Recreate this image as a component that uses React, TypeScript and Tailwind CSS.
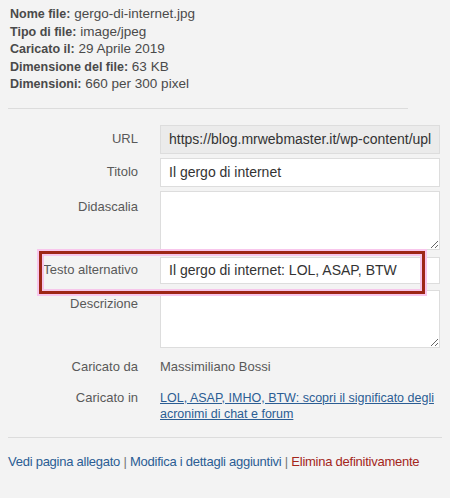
const infoRows: Array<[string, string]> = [
  ["Nome file:", "gergo-di-internet.jpg"],
  ["Tipo di file:", "image/jpeg"],
  ["Caricato il:", "29 Aprile 2019"],
  ["Dimensione del file:", "63 KB"],
  ["Dimensioni:", "660 per 300 pixel"],
];

const font = "[font-family:'Liberation_Sans',Arial,sans-serif]";

function Label({ children, className = "" }: { children: React.ReactNode; className?: string }) {
  return (
    <div className={`w-[160px] shrink-0 pr-[22px] text-right text-[13px] leading-[16px] text-[#595959] ${className}`}>
      {children}
    </div>
  );
}

export default function App() {
  return (
    <div className={`h-[498px] w-[450px] overflow-hidden bg-[#f3f3f3] ${font}`}>
      <div className="px-[10px] pt-[5px]">
        {infoRows.map(([k, v]) => (
          <p key={k} className="h-[17.5px] text-[13.5px] leading-[17.5px] text-[#4a4a4a]">
            <strong className="text-[12.5px] font-bold">{k}</strong> {v}
          </p>
        ))}
      </div>

      <div className="ml-[8px] mt-[15px] w-[400px] border-t border-[#dcdcdc]" />

      <div className="mt-[16px] flex flex-col">
        <div className="flex items-center">
          <Label>URL</Label>
          <input
            readOnly
            value="https://blog.mrwebmaster.it/wp-content/uploads/2019/04/gergo-di-internet.jpg"
            className="h-[29px] w-[280px] border border-[#ddd] bg-[#ebebeb] px-[8px] text-[14px] text-[#333] outline-none"
          />
        </div>

        <div className="mt-[4px] flex items-center">
          <Label>Titolo</Label>
          <input
            readOnly
            value="Il gergo di internet"
            className="h-[29px] w-[280px] border border-[#ddd] bg-white px-[8px] text-[14px] text-[#333] outline-none"
          />
        </div>

        <div className="mt-[4px] flex items-start">
          <Label className="pt-[8px]">Didascalia</Label>
          <textarea readOnly className="h-[59px] w-[280px] border border-[#ddd] bg-white outline-none" />
        </div>

        <div className="relative mt-[7px] flex items-center">
          <div className="pointer-events-none absolute left-[39px] top-[-6px] h-[43px] w-[386px] border-[3px] border-[#9e2616] outline-2 outline-[#f8c6ec] ring-2 ring-inset ring-[#f6c6ea]" />
          <Label>Testo alternativo</Label>
          <input
            readOnly
            value="Il gergo di internet: LOL, ASAP, BTW"
            className="h-[27px] w-[280px] border border-[#ddd] bg-white px-[8px] text-[14px] text-[#333] outline-none"
          />
        </div>

        <div className="mt-[6px] flex items-start">
          <Label className="pt-[6px]">Descrizione</Label>
          <textarea readOnly className="h-[58px] w-[280px] border border-[#ddd] bg-white outline-none" />
        </div>

        <div className="mt-[11px] flex items-center">
          <Label>Caricato da</Label>
          <span className="text-[13px] leading-[16px] text-[#595959]">Massimiliano Bossi</span>
        </div>

        <div className="mt-[15px] flex items-start">
          <Label>Caricato in</Label>
          <a className="w-[280px] text-[12.5px] leading-[16px] text-[#2b5d93] underline">
            LOL, ASAP, IMHO, BTW: scopri il significato degli acronimi di chat e forum
          </a>
        </div>
      </div>

      <div className="ml-[8px] mt-[15px] w-[434px] border-t border-[#dcdcdc]" />

      <div className="ml-[8px] mt-[16px] whitespace-nowrap text-[13px] leading-[16px] tracking-[-0.25px] text-[#777]">
        <a className="text-[#2b5d93]">Vedi pagina allegato</a> |{" "}
        <a className="text-[#2b5d93]">Modifica i dettagli aggiuntivi</a> |{" "}
        <a className="text-[#a3261b]">Elimina definitivamente</a>
      </div>
    </div>
  );
}
